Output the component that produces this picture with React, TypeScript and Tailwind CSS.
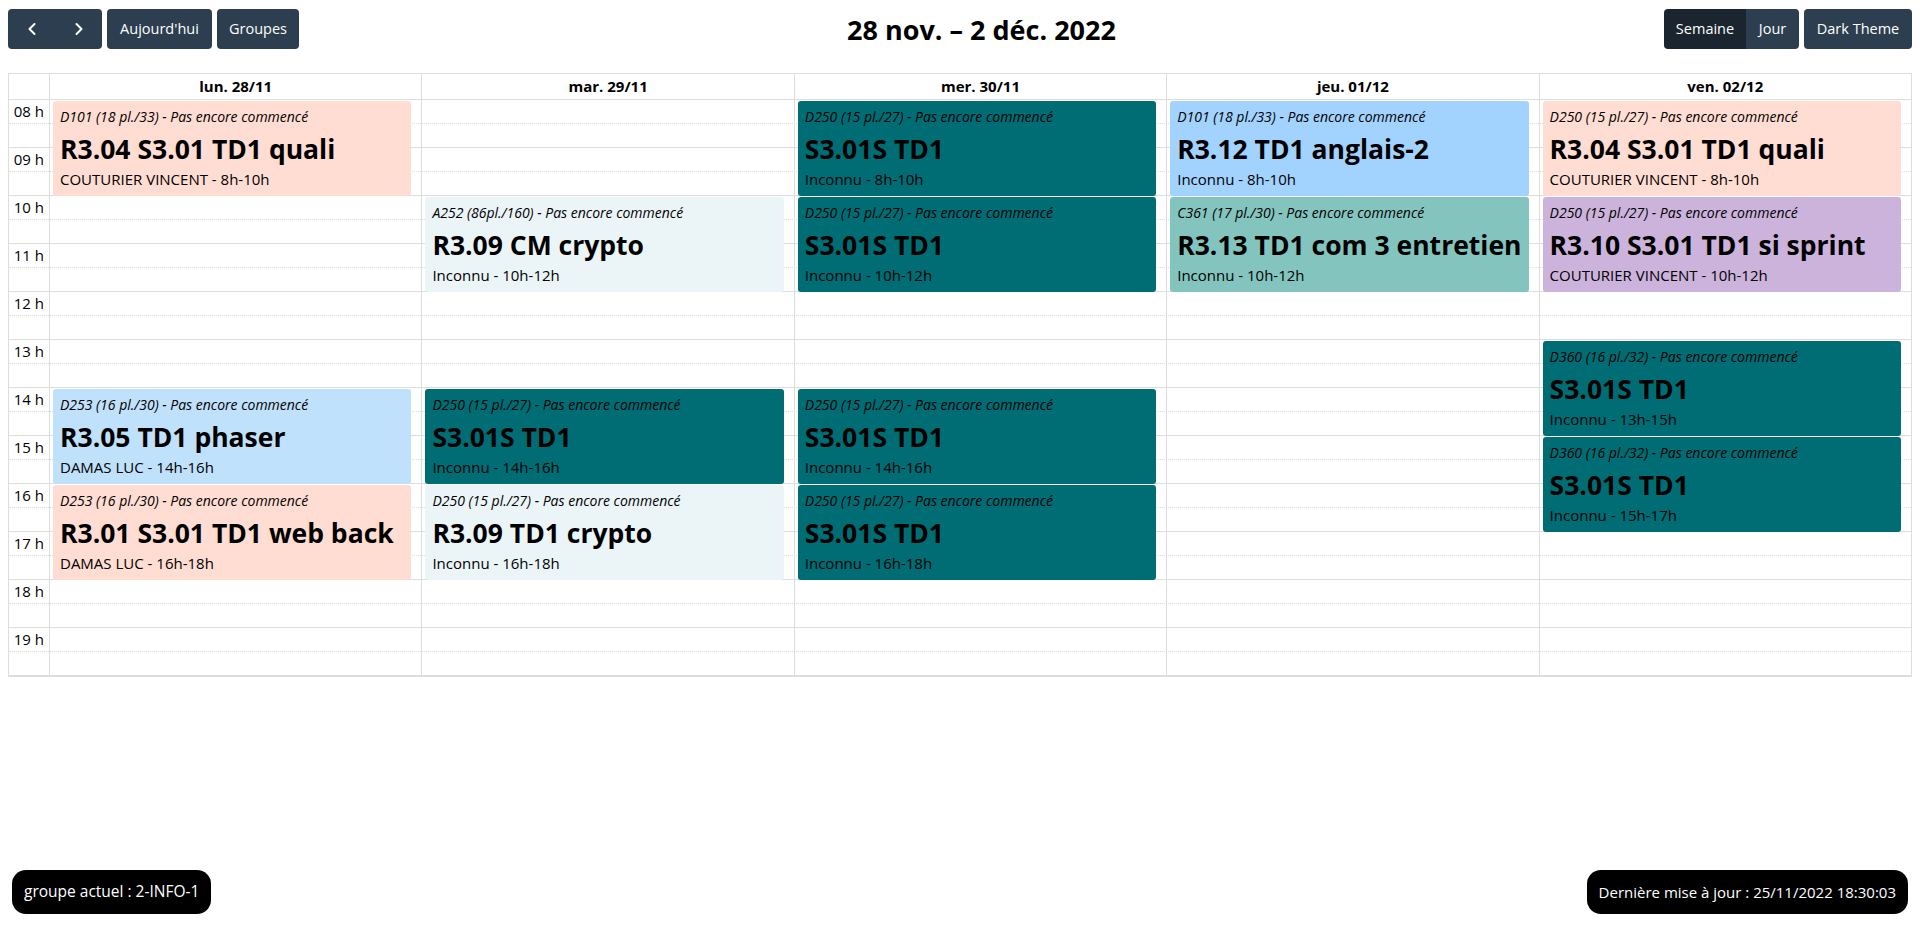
import React from "react";
import { ChevronLeft, ChevronRight } from "lucide-react";

type Ev = {
  day: number;
  start: number;
  end: number;
  room: string;
  title: string;
  who: string;
  bg: string;
};

const PEACH = "bg-[#ffddd2]";
const TEAL = "bg-[#006d75]";
const BLUE = "bg-[#a2d2fe]";
const BLUE2 = "bg-[#bfe1fb]";
const PALE = "bg-[#ebf5f8]";
const MINT = "bg-[#83c5be]";
const LILAC = "bg-[#ccb3dc]";

const events: Ev[] = [
  { day: 0, start: 8, end: 10, room: "D101 (18 pl./33) - Pas encore commencé", title: "R3.04 S3.01 TD1 quali", who: "COUTURIER VINCENT - 8h-10h", bg: PEACH },
  { day: 0, start: 14, end: 16, room: "D253 (16 pl./30) - Pas encore commencé", title: "R3.05 TD1 phaser", who: "DAMAS LUC - 14h-16h", bg: BLUE2 },
  { day: 0, start: 16, end: 18, room: "D253 (16 pl./30) - Pas encore commencé", title: "R3.01 S3.01 TD1 web back", who: "DAMAS LUC - 16h-18h", bg: PEACH },
  { day: 1, start: 10, end: 12, room: "A252 (86pl./160) - Pas encore commencé", title: "R3.09 CM crypto", who: "Inconnu - 10h-12h", bg: PALE },
  { day: 1, start: 14, end: 16, room: "D250 (15 pl./27) - Pas encore commencé", title: "S3.01S TD1", who: "Inconnu - 14h-16h", bg: TEAL },
  { day: 1, start: 16, end: 18, room: "D250 (15 pl./27) - Pas encore commencé", title: "R3.09 TD1 crypto", who: "Inconnu - 16h-18h", bg: PALE },
  { day: 2, start: 8, end: 10, room: "D250 (15 pl./27) - Pas encore commencé", title: "S3.01S TD1", who: "Inconnu - 8h-10h", bg: TEAL },
  { day: 2, start: 10, end: 12, room: "D250 (15 pl./27) - Pas encore commencé", title: "S3.01S TD1", who: "Inconnu - 10h-12h", bg: TEAL },
  { day: 2, start: 14, end: 16, room: "D250 (15 pl./27) - Pas encore commencé", title: "S3.01S TD1", who: "Inconnu - 14h-16h", bg: TEAL },
  { day: 2, start: 16, end: 18, room: "D250 (15 pl./27) - Pas encore commencé", title: "S3.01S TD1", who: "Inconnu - 16h-18h", bg: TEAL },
  { day: 3, start: 8, end: 10, room: "D101 (18 pl./33) - Pas encore commencé", title: "R3.12 TD1 anglais-2", who: "Inconnu - 8h-10h", bg: BLUE },
  { day: 3, start: 10, end: 12, room: "C361 (17 pl./30) - Pas encore commencé", title: "R3.13 TD1 com 3 entretien", who: "Inconnu - 10h-12h", bg: MINT },
  { day: 4, start: 8, end: 10, room: "D250 (15 pl./27) - Pas encore commencé", title: "R3.04 S3.01 TD1 quali", who: "COUTURIER VINCENT - 8h-10h", bg: PEACH },
  { day: 4, start: 10, end: 12, room: "D250 (15 pl./27) - Pas encore commencé", title: "R3.10 S3.01 TD1 si sprint", who: "COUTURIER VINCENT - 10h-12h", bg: LILAC },
  { day: 4, start: 13, end: 15, room: "D360 (16 pl./32) - Pas encore commencé", title: "S3.01S TD1", who: "Inconnu - 13h-15h", bg: TEAL },
  { day: 4, start: 15, end: 17, room: "D360 (16 pl./32) - Pas encore commencé", title: "S3.01S TD1", who: "Inconnu - 15h-17h", bg: TEAL },
];

const days = ["lun. 28/11", "mar. 29/11", "mer. 30/11", "jeu. 01/12", "ven. 02/12"];
const hours = [8, 9, 10, 11, 12, 13, 14, 15, 16, 17, 18, 19];
const HOUR = 48;

function Btn({
  children,
  className = "",
  active = false,
}: {
  children: React.ReactNode;
  className?: string;
  active?: boolean;
}) {
  return (
    <button
      className={
        "h-[40px] flex items-center justify-center text-white text-[14.5px] " +
        (active ? "bg-[#1a252f] " : "bg-[#2c3e50] ") +
        className
      }
    >
      {children}
    </button>
  );
}

export default function App() {
  return (
    <div
      className="h-screen flex flex-col bg-white text-black"
      style={{ fontFamily: '"Open Sans", "Noto Sans", sans-serif' }}
    >
      <div className="px-2 pt-[9px]">
        {/* toolbar */}
        <div className="flex items-center justify-between h-[40px]">
          <div className="flex items-center gap-[5px]">
            <div className="flex rounded-[4px] overflow-hidden">
              <Btn className="w-[47px]">
                <ChevronLeft size={20} strokeWidth={2.4} />
              </Btn>
              <Btn className="w-[47px]">
                <ChevronRight size={20} strokeWidth={2.4} />
              </Btn>
            </div>
            <Btn className="w-[105px] rounded-[4px]">Aujourd'hui</Btn>
            <Btn className="w-[82px] rounded-[4px]">Groupes</Btn>
          </div>
          <h2 className="text-[27px] font-bold leading-none">28 nov. – 2 déc. 2022</h2>
          <div className="flex items-center gap-[5px]">
            <div className="flex rounded-[4px] overflow-hidden">
              <Btn className="w-[82px]" active>
                Semaine
              </Btn>
              <Btn className="w-[53px]">Jour</Btn>
            </div>
            <Btn className="w-[108px] rounded-[4px]">Dark Theme</Btn>
          </div>
        </div>

        {/* calendar */}
        <div className="mt-[24px] border border-[#dddddd]">
          <div className="grid grid-cols-[40px_repeat(5,1fr)] h-[26px] border-b border-[#dddddd]">
            <div />
            {days.map((d) => (
              <div
                key={d}
                className="border-l border-[#dddddd] flex items-center justify-center text-[15px] font-bold"
              >
                {d}
              </div>
            ))}
          </div>
          <div className="relative">
            {hours.map((h) => (
              <React.Fragment key={h}>
                <div className="flex h-[24px] border-b border-dotted border-[#dddddd]">
                  <div className="w-[40px] flex items-center justify-end pr-[5px] text-[15px] leading-none">
                    {String(h).padStart(2, "0")} h
                  </div>
                </div>
                <div className="h-[24px] border-b border-[#dddddd] last:border-b-0" />
              </React.Fragment>
            ))}
            <div className="absolute inset-0 grid grid-cols-[40px_repeat(5,1fr)]">
              <div />
              {days.map((d, di) => (
                <div key={d} className="relative border-l border-[#dddddd]">
                  {events
                    .filter((e) => e.day === di)
                    .map((e, i) => (
                      <div
                        key={i}
                        className={
                          "absolute left-[3px] right-[10px] rounded-[3px] overflow-hidden px-[7px] pt-[7px] " + e.bg
                        }
                        style={{ top: (e.start - 8) * HOUR + 1, height: (e.end - e.start) * HOUR - 1 }}
                      >
                        <div className="text-[14px] italic leading-[18px] whitespace-nowrap">{e.room}</div>
                        <div className="mt-[5px] text-[26.5px] font-bold leading-[36px] whitespace-nowrap">
                          {e.title}
                        </div>
                        <div className="mt-[3px] text-[15px] leading-[18px] whitespace-nowrap">{e.who}</div>
                      </div>
                    ))}
                </div>
              ))}
            </div>
          </div>
        </div>
      </div>

      <div className="flex-1" />

      <div className="flex justify-between items-end px-3 pb-[13px]">
        <div className="h-[44px] px-[12px] rounded-[14px] bg-black text-white text-[15.5px] flex items-center">
          groupe actuel : 2-INFO-1
        </div>
        <div className="h-[44px] px-[12px] rounded-[14px] bg-black text-white text-[15px] flex items-center">
          Dernière mise à jour : 25/11/2022 18:30:03
        </div>
      </div>
    </div>
  );
}
